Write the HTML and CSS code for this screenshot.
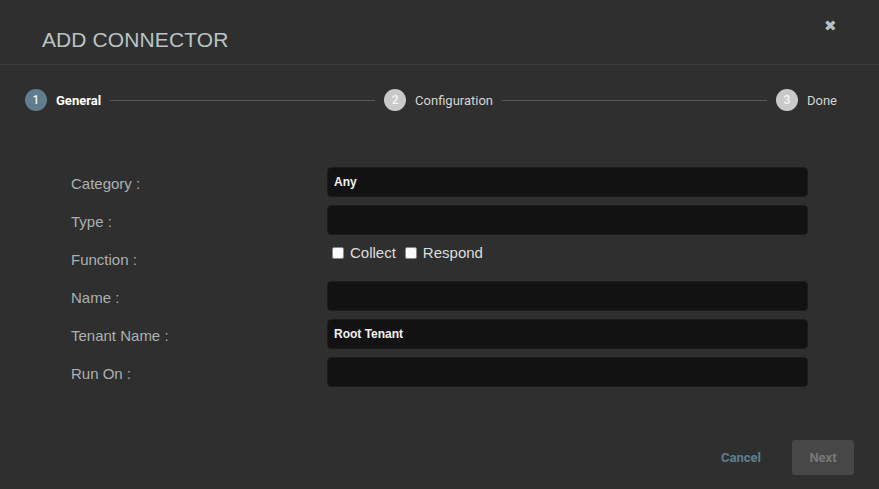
FILE: index.html
```html
<!DOCTYPE html>
<html>
<head>
<meta charset="utf-8">
<link rel="stylesheet" href="styles.css">
</head>
<body>
<div class="dialog">
  <div class="header">
    <h1 class="title">ADD CONNECTOR</h1>
    <span class="close">&#x2716;</span>
  </div>
  <div class="stepper">
    <div class="step active"><span class="num">1</span><span class="label">General</span></div>
    <div class="line"></div>
    <div class="step"><span class="num">2</span><span class="label">Configuration</span></div>
    <div class="line"></div>
    <div class="step"><span class="num">3</span><span class="label">Done</span></div>
  </div>
  <div class="form">
    <div class="lbl">Category :</div><div class="field">Any</div>
    <div class="lbl">Type :</div><div class="field"></div>
    <div class="lbl">Function :</div>
    <div class="checks">
      <label class="chk"><span class="box"></span>Collect</label>
      <label class="chk"><span class="box"></span>Respond</label>
    </div>
    <div class="lbl">Name :</div><div class="field"></div>
    <div class="lbl">Tenant Name :</div><div class="field">Root Tenant</div>
    <div class="lbl">Run On :</div><div class="field"></div>
  </div>
  <div class="footer">
    <span class="cancel">Cancel</span>
    <span class="next">Next</span>
  </div>
</div>
</body>
</html>
```
FILE: styles.css
```css
html, body {
  margin: 0;
  padding: 0;
  background: #2f2f2f;
  height: 100%;
}
.dialog {
  width: 879px;
  height: 489px;
  background: #2f2f2f;
  display: flex;
  flex-direction: column;
  font-family: "Liberation Sans", Arial, sans-serif;
}
.header {
  height: 64px;
  border-bottom: 1px solid #3a3a42;
  display: flex;
  align-items: flex-start;
  justify-content: space-between;
  padding: 0 42px;
  box-sizing: content-box;
}
.title {
  margin: 28px 0 0 0;
  font-size: 21px;
  font-weight: 400;
  color: #b9c4c6;
  line-height: 24px;
  letter-spacing: 0.1px;
}
.close {
  margin: 16px 0 0 0;
  color: #b4c4c4;
  font-size: 15px;
  line-height: 20px;
}
.stepper {
  display: flex;
  align-items: center;
  padding: 0 42px 0 25px;
  margin-top: 24px;
  height: 22px;
  font-family: Roboto, "Liberation Sans", sans-serif;
}
.step {
  display: flex;
  align-items: center;
  gap: 9px;
}
.num {
  width: 22px;
  height: 22px;
  border-radius: 50%;
  background: #c9c9c9;
  color: #f6f6f6;
  font-size: 12px;
  font-weight: 500;
  display: flex;
  align-items: center;
  justify-content: center;
}
.label {
  color: #d4d4d4;
  font-size: 13px;
}
.step.active .num {
  background: #5f7d8c;
  color: #eef2f4;
}
.step.active .label {
  color: #ffffff;
  font-weight: 700;
}
.line {
  flex: 1;
  height: 1px;
  background: #5a5a5a;
  margin: 0 9px;
}
.form {
  margin-top: 56px;
  display: grid;
  grid-template-columns: 256px 481px;
  grid-auto-rows: 30px;
  row-gap: 8px;
  padding-left: 71px;
}
.lbl {
  color: #a9b1b2;
  font-size: 15px;
  display: flex;
  align-items: center;
  padding-top: 2px;
}
.field {
  background: #121212;
  border: 1px solid #1c1c1c;
  border-radius: 4px;
  color: #f2f2f2;
  font-size: 12px;
  font-weight: 700;
  display: flex;
  align-items: center;
  padding-left: 6px;
}
.checks {
  display: flex;
  align-items: flex-start;
  gap: 9px;
  padding-left: 5px;
  padding-top: 1px;
}
.chk {
  display: flex;
  align-items: center;
  color: #dedede;
  font-size: 15px;
  line-height: 18px;
}
.box {
  width: 10px;
  height: 10px;
  background: #fafafa;
  border: 1px solid #888;
  border-radius: 2px;
  margin-right: 6px;
}
.footer {
  margin-top: auto;
  margin-bottom: 14px;
  display: flex;
  justify-content: flex-end;
  align-items: center;
  gap: 31px;
  padding-right: 25px;
  font-family: Roboto, "Liberation Sans", sans-serif;
  font-size: 13px;
  font-weight: 700;
}
.cancel {
  color: #5d7e8e;
}
.next {
  width: 62px;
  height: 35px;
  border-radius: 3px;
  background: #474747;
  color: #787878;
  display: flex;
  align-items: center;
  justify-content: center;
}
```
